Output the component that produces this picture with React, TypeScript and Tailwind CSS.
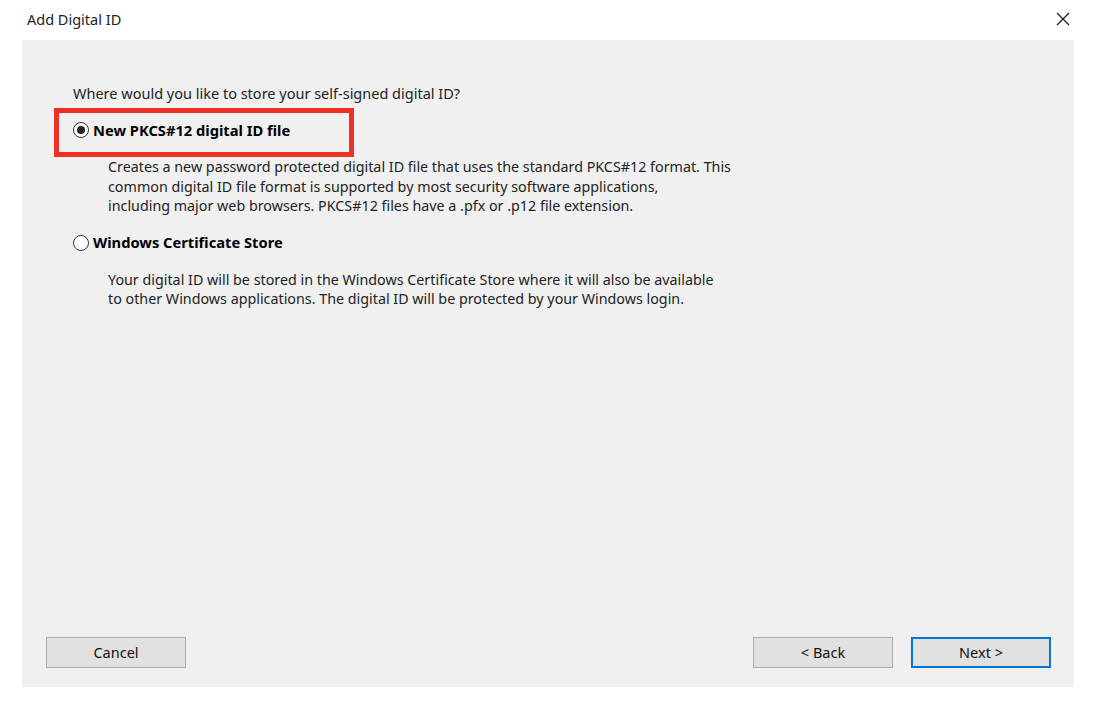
import React from 'react'

const font = { fontFamily: '"Noto Sans", "Open Sans", sans-serif' }

function Radio({ checked }: { checked: boolean }) {
  return (
    <span className="flex h-[16px] w-[16px] shrink-0 items-center justify-center rounded-full border border-[#333] bg-white">
      {checked && <span className="h-[8px] w-[8px] rounded-full bg-[#222]" />}
    </span>
  )
}

function Option(props: { checked: boolean; label: string; lines: string[] }) {
  return (
    <div className="flex flex-col">
      <div className="flex h-[22px] items-center gap-[4px]">
        <Radio checked={props.checked} />
        <span className="text-[14.7px] font-bold text-black">{props.label}</span>
      </div>
      <div className="mt-[16px] pl-[35px] text-[14.3px] leading-[19.5px] text-[#222]">
        {props.lines.map((l) => (
          <div key={l}>{l}</div>
        ))}
      </div>
    </div>
  )
}

function Button(props: { label: string; primary?: boolean }) {
  const border = props.primary ? 'border-2 border-[#0078d7]' : 'border border-[#adadad]'
  return (
    <button
      className={`flex h-[31px] w-[140px] items-center justify-center bg-[#e1e1e1] text-[14.5px] text-[#111] ${border}`}
    >
      {props.label}
    </button>
  )
}

export default function App() {
  return (
    <div className="flex h-[704px] w-[1096px] flex-col bg-white" style={font}>
      <div className="flex h-[40px] items-center justify-between pl-[27px] pr-[26px]">
        <span className="text-[14.5px] text-[#222]">Add Digital ID</span>
        <svg width="14" height="14" viewBox="0 0 14 14" className="mb-[2px]">
          <path d="M1 1 L13 13 M13 1 L1 13" stroke="#222" strokeWidth="1.3" />
        </svg>
      </div>
      <div className="relative mx-[22px] flex h-[647px] flex-col bg-[#f0f0f0] pb-[19px] pl-[24px] pr-[23px] pt-[43px]">
        <div className="pl-[27px] text-[14.5px] leading-[20px] text-[#222]">
          Where would you like to store your self-signed digital ID?
        </div>
        <div className="mt-[16px] flex flex-col gap-[16px] pl-[27px]">
          <Option
            checked
            label="New PKCS#12 digital ID file"
            lines={[
              'Creates a new password protected digital ID file that uses the standard PKCS#12 format. This',
              'common digital ID file format is supported by most security software applications,',
              'including major web browsers. PKCS#12 files have a .pfx or .p12 file extension.',
            ]}
          />
          <Option
            checked={false}
            label="Windows Certificate Store"
            lines={[
              'Your digital ID will be stored in the Windows Certificate Store where it will also be available',
              'to other Windows applications. The digital ID will be protected by your Windows login.',
            ]}
          />
        </div>
        <div className="pointer-events-none absolute left-[32px] top-[68px] h-[49px] w-[300px] border-[5px] border-[#ee3124]" />
        <div className="mt-auto flex items-center justify-between">
          <Button label="Cancel" />
          <div className="flex gap-[18px]">
            <Button label="< Back" />
            <Button label="Next >" primary />
          </div>
        </div>
      </div>
    </div>
  )
}
